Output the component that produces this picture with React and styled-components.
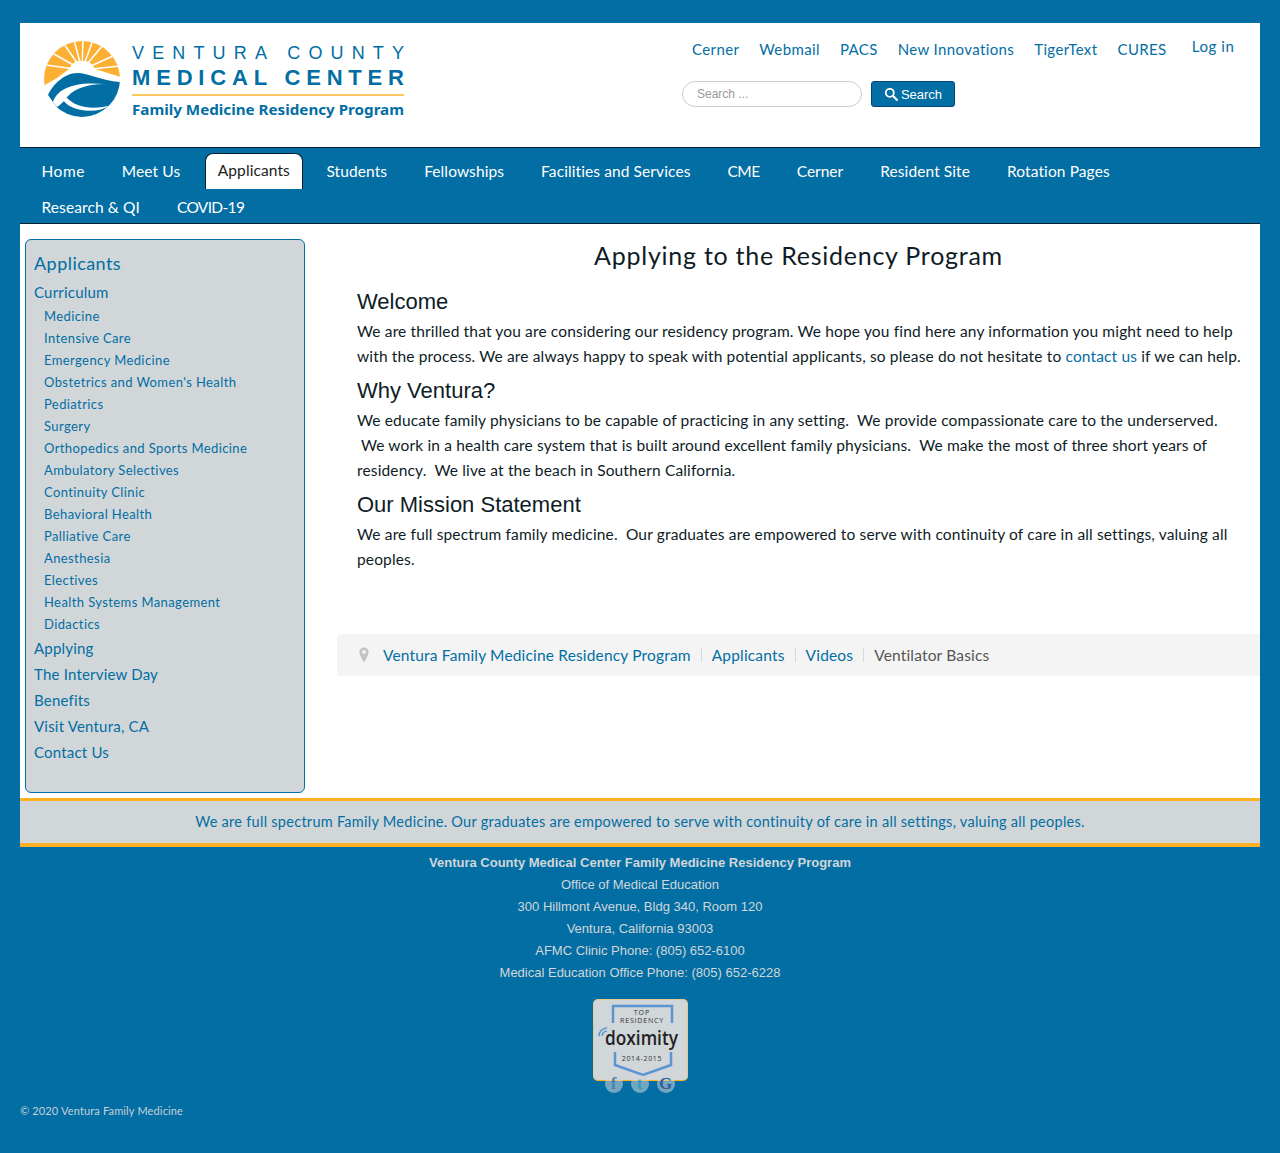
import React from "react";
import styled, { createGlobalStyle } from "styled-components";

const BLUE = "#026ea3";
const FONT = `"Lato", "Open Sans", sans-serif`;

const Global = createGlobalStyle`
  html, body { margin: 0; padding: 0; background: ${BLUE}; }
  body { font-family: ${FONT}; font-size: 15px; color: #0e1c26; }
  a { color: ${BLUE}; text-decoration: none; }
`;

const Page = styled.div`
  width: 1240px;
  margin: 0 auto;
  padding-top: 23px;
  height: 1130px;
`;
const Header = styled.header`
  background: #fff;
  height: 124px;
  display: flex;
  justify-content: space-between;
`;
const LogoWrap = styled.div`
  padding: 17px 0 0 23px;
`;
const HeaderRight = styled.div`
  width: 578px;
  display: flex;
  flex-direction: column;
`;
const TopLinks = styled.div`
  display: flex;
  align-items: flex-start;
  padding-top: 16px;
  height: 42px;
`;
const TopLink = styled.a`
  font-size: 15px;
  line-height: 20px;
  letter-spacing: 0.38px;
  margin-left: ${(p) => p.$ml}px;
`;
const LogIn = styled.a`
  font-size: 15px;
  line-height: 20px;
  letter-spacing: 0.6px;
  margin-left: 25px;
  margin-top: -3px;
`;
const SearchRow = styled.form`
  display: flex;
  gap: 9px;
  margin: 0;
`;
const SearchInput = styled.input`
  width: 180px;
  height: 26px;
  box-sizing: border-box;
  border: 1px solid #ccc;
  border-radius: 13px;
  padding: 0 14px;
  font: 12px "Liberation Sans", sans-serif;
  background: #fff;
  &::placeholder { color: #999; opacity: 1; }
`;
const SearchButton = styled.button`
  height: 26px;
  width: 84px;
  box-sizing: border-box;
  display: flex;
  align-items: center;
  justify-content: center;
  gap: 2px;
  background: ${BLUE};
  color: #fff;
  border: 1px solid #04437e;
  border-radius: 3px;
  font: 13px "Liberation Sans", sans-serif;
  padding: 0;
`;
const Nav = styled.nav`
  background: ${BLUE};
  border-top: 1px solid #06202f;
  border-bottom: 1px solid #06202f;
  height: 75px;
  padding-left: 3px;
`;
const NavRow = styled.div`
  display: flex;
  height: ${(p) => p.$h}px;
  padding-top: ${(p) => p.$pt}px;
  box-sizing: border-box;
`;
const NavItem = styled.a`
  display: block;
  box-sizing: border-box;
  color: ${(p) => (p.$active ? "#222" : "#fff")};
  background: ${(p) => (p.$active ? "#fff" : "transparent")};
  border: 1px solid ${(p) => (p.$active ? "#06202f" : "transparent")};
  border-bottom: 0;
  border-radius: 8px 8px 0 0;
  height: 36px;
  line-height: ${(p) => (p.$active ? "33px" : "35px")};
  font-size: 15.5px;
  letter-spacing: ${(p) => p.$ls ?? 0.1}px;
  padding: 0 ${(p) => (p.$active ? 12 : 17.5)}px;
  margin: ${(p) => (p.$active ? "0 5px 0 6px" : "0")};
  white-space: nowrap;
`;
const Main = styled.main`
  background: #fff;
  height: 574px;
  display: flex;
  padding: 15px 0 0 5px;
  box-sizing: border-box;
`;
const Side = styled.aside`
  width: 280px;
  height: 554px;
  box-sizing: border-box;
  background: #d1d6d9;
  border: 1px solid ${BLUE};
  border-radius: 6px;
  padding: 10px 8px;
  flex: none;
`;
const SideTitle = styled.a`
  display: block;
  font-size: 18px;
  letter-spacing: 0.45px;
  line-height: 26px;
  margin-bottom: 3px;
`;
const SideTop = styled.a`
  display: block;
  font-size: 15px;
  letter-spacing: 0.2px;
  line-height: 26px;
`;
const SideSub = styled.a`
  display: block;
  font-size: 13px;
  letter-spacing: 0.4px;
  line-height: 22px;
  padding-left: 10px;
`;
const Content = styled.div`
  flex: 1;
  margin-left: 32px;
  display: flex;
  flex-direction: column;
`;
const Title = styled.h1`
  margin: -1px 0 0;
  text-align: center;
  font: 400 25px/34px ${FONT};
  letter-spacing: 0.75px;
  color: #0e1c26;
`;
const Article = styled.article`
  padding: 14px 16px 0 20px;
  height: 342px;
  box-sizing: border-box;
`;
const Heading = styled.h2`
  margin: 0 0 1px;
  font: 400 22px/32px "Liberation Sans", Arial, sans-serif;
  color: #0e1c26;
`;
const Para = styled.p`
  margin: 0 0 6px;
  font-size: 15.5px;
  line-height: 25px;
  letter-spacing: 0.15px;
  color: #0e1c26;
`;
const Crumbs = styled.div`
  margin-top: 20px;
  height: 42px;
  background: #f4f4f4;
  border-radius: 4px 0 0 4px;
  display: flex;
  align-items: center;
  padding-left: 22px;
  font-size: 15.5px;
  line-height: 40px;
  letter-spacing: 0.17px;
  color: #555;
`;
const CrumbLink = styled.a`
  margin-left: ${(p) => p.$ml || 0}px;
`;
const Divider = styled.span`
  width: 1px;
  height: 14px;
  background: #d8d8d8;
  margin: 0 10px;
`;
const Strip = styled.div`
  background: #d1d6d9;
  border-top: 3px solid #fdb022;
  border-bottom: 4px solid #fdb022;
  height: 42px;
  line-height: 42px;
  text-align: center;
  color: ${BLUE};
  font-size: 14.5px;
  letter-spacing: 0.27px;
`;
const Contact = styled.div`
  text-align: center;
  font: 13px/22px "Liberation Sans", Arial, sans-serif;
  color: #d1d6d9;
  padding-top: 5px;
`;
const BadgeWrap = styled.div`
  position: relative;
  width: 95px;
  height: 82px;
  margin: 15px auto 0;
`;
const Badge = styled.div`
  width: 95px;
  height: 82px;
  box-sizing: border-box;
  background: #d1d6d9;
  border: 1px solid #e8c98c;
  border-bottom-color: #fdb022;
  border-radius: 5px;
  overflow: hidden;
`;
const BadgeSvgText = styled.text`
  font-family: "Open Sans", sans-serif;
`;
const Social = styled.div`
  position: absolute;
  left: 12px;
  top: 76px;
  display: flex;
  gap: 8px;
`;
const SocialIcon = styled.span`
  width: 18px;
  height: 18px;
  border-radius: 50%;
  background: rgba(209, 214, 217, 0.55);
  color: ${(p) => p.$c};
  display: flex;
  align-items: center;
  justify-content: center;
  font: 700 17px/18px "Liberation Serif", serif;
`;
const Copy = styled.div`
  margin-top: 23px;
  font-size: 11px;
  letter-spacing: 0.15px;
  color: #c6d0d6;
`;

const rays = [[21, 4], [31, 0], [40, -1], [50, 0], [60, 5], [11, 14], [70, 16], [3, 25], [78, 26]];

function Logo() {
  return (
    <svg width="368" height="88" viewBox="0 0 368 88">
      <defs>
        <clipPath id="c"><circle cx="39" cy="39" r="38" /></clipPath>
      </defs>
      <g clipPath="url(#c)">
        <rect x="0" y="0" width="78" height="50" fill="#fbb034" />
        <g stroke="#fff" strokeWidth="1.5">
          {rays.map(([x, y]) => <line key={x} x1="39" y1="30" x2={x} y2={y} />)}
        </g>
        <path d="M0 46 L14 38 L26 29 A14 13 0 0 1 52 29 L78 37 V80 H0 Z" fill="#fff" />
        <path d="M5 55 C10 44 22 33 34 33 C46 33 58 41 78 42 V80 H22 C18 76 14 70 13 66 L10 62 Z" fill="#026ea3" />
        <path d="M10 62 C14 50 28 41 62 44 C42 44 28 50 22 60 C19 63 16 66 14 67 Z" fill="#fff" />
        <path d="M19 58 C24 70 50 76 69 65 C50 70 34 68 24 58 Z" fill="#fff" />
      </g>
      <text x="89" y="19" fontFamily='"Liberation Sans", sans-serif' fontSize="18" textLength="272" lengthAdjust="spacing" fill="#026ea3">VENTURA COUNTY</text>
      <text x="89" y="45" fontFamily='"Liberation Sans", sans-serif' fontWeight="700" fontSize="22" textLength="272" lengthAdjust="spacing" fill="#026ea3">MEDICAL CENTER</text>
      <rect x="89" y="54" width="272" height="2" fill="#fbc760" />
      <text x="89" y="75" fontFamily='"Noto Sans", sans-serif' fontWeight="700" fontSize="15" textLength="272" lengthAdjust="spacingAndGlyphs" fill="#026ea3">Family Medicine Residency Program</text>
    </svg>
  );
}

function SearchIcon() {
  return (
    <svg width="15" height="15" viewBox="0 0 15 15" fill="none" stroke="#fff" strokeWidth="1.800">
      <circle cx="5.800" cy="5.800" r="4" />
      <line x1="8.800" y1="8.800" x2="13.500" y2="13.500" strokeWidth="2.200" />
    </svg>
  );
}

function Pin() {
  return (
    <svg width="10" height="16" viewBox="0 0 10 16">
      <path d="M5 0.5a4.6 4.6 0 0 0-4.6 4.6C.4 8.6 5 15.500 5 15.500S9.600 8.600 9.600 5.100A4.600 4.600 0 0 0 5 .5Zm0 6.500a2 2 0 1 1 0-4 2 2 0 0 1 0 4Z" fill="#c4c4c4" />
    </svg>
  );
}

function BadgeArt() {
  return (
    <svg width="93" height="80" viewBox="1 1 93 80" style={{ display: "block" }}>
      <path d="M20 24 V7 H79 V24" fill="none" stroke="#5c93d3" strokeWidth="2.500" />
      <BadgeSvgText x="49" y="16" textAnchor="middle" fontSize="7" letterSpacing="1" fill="#333">TOP</BadgeSvgText>
      <BadgeSvgText x="49" y="24" textAnchor="middle" fontSize="7" letterSpacing="0.8" fill="#333">RESIDENCY</BadgeSvgText>
      <path d="M6 37 A8 8 0 0 1 14 29" fill="none" stroke="#5c93d3" strokeWidth="1.500" />
      <path d="M9 37 A5 5 0 0 1 14 32" fill="none" stroke="#5c93d3" strokeWidth="1.500" />
      <BadgeSvgText x="12" y="46" fontSize="19" fontWeight="600" fill="#222" textLength="73" lengthAdjust="spacingAndGlyphs">doximity</BadgeSvgText>
      <BadgeSvgText x="49" y="62" textAnchor="middle" fontSize="7" letterSpacing="0.7" fill="#333">2014-2015</BadgeSvgText>
      <path d="M22 53 V66 L50 76 L78 66 V53" fill="none" stroke="#5c93d3" strokeWidth="2.500" />
    </svg>
  );
}

const subs = ["Medicine", "Intensive Care", "Emergency Medicine", "Obstetrics and Women's Health", "Pediatrics", "Surgery", "Orthopedics and Sports Medicine", "Ambulatory Selectives", "Continuity Clinic", "Behavioral Health", "Palliative Care", "Anesthesia", "Electives", "Health Systems Management", "Didactics"];
const tops = ["Applying", "The Interview Day", "Benefits", "Visit Ventura, CA", "Contact Us"];

export default function App() {
  return (
    <Page>
      <Global />
      <Header>
        <LogoWrap><Logo /></LogoWrap>
        <HeaderRight>
          <TopLinks>
            <TopLink $ml={10} href="#">Cerner</TopLink>
            <TopLink $ml={20} href="#">Webmail</TopLink>
            <TopLink $ml={20} href="#">PACS</TopLink>
            <TopLink $ml={20} href="#">New Innovations</TopLink>
            <TopLink $ml={20} href="#">TigerText</TopLink>
            <TopLink $ml={20} href="#">CURES</TopLink>
            <LogIn href="#">Log in</LogIn>
          </TopLinks>
          <SearchRow>
            <SearchInput placeholder="Search ..." />
            <SearchButton type="button"><SearchIcon />Search</SearchButton>
          </SearchRow>
        </HeaderRight>
      </Header>
      <Nav>
        <NavRow $h={41} $pt={5}>
          <NavItem $ls={0.5} href="#">Home</NavItem>
          <NavItem href="#">Meet Us</NavItem>
          <NavItem $active href="#">Applicants</NavItem>
          <NavItem href="#">Students</NavItem>
          <NavItem href="#">Fellowships</NavItem>
          <NavItem href="#">Facilities and Services</NavItem>
          <NavItem $ls={-0.5} href="#">CME</NavItem>
          <NavItem $ls={0} href="#">Cerner</NavItem>
          <NavItem href="#">Resident Site</NavItem>
          <NavItem href="#">Rotation Pages</NavItem>
        </NavRow>
        <NavRow $h={34} $pt={0}>
          <NavItem href="#">Research &amp; QI</NavItem>
          <NavItem $ls={-0.65} href="#">COVID-19</NavItem>
        </NavRow>
      </Nav>
      <Main>
        <Side>
          <SideTitle href="#">Applicants</SideTitle>
          <SideTop href="#">Curriculum</SideTop>
          {subs.map((s) => <SideSub key={s} href="#">{s}</SideSub>)}
          {tops.map((s) => <SideTop key={s} href="#">{s}</SideTop>)}
        </Side>
        <Content>
          <Title>Applying to the Residency Program</Title>
          <Article>
            <Heading>Welcome</Heading>
            <Para>We are thrilled that you are considering our residency program. We hope you find here any information you might need to help with the process. We are always happy to speak with potential applicants, so please do not hesitate to <a href="#">contact us</a> if we can help.</Para>
            <Heading>Why Ventura?</Heading>
            <Para>{"We educate family physicians to be capable of practicing in any setting.\u00a0 We provide compassionate care to the underserved. \u00a0We work in a health care system that is built around excellent family physicians.\u00a0 We make the most of three short years of residency.\u00a0 We live at the beach in Southern California."}</Para>
            <Heading>Our Mission Statement</Heading>
            <Para>{"We are full spectrum family medicine.\u00a0 Our graduates are empowered to serve with continuity of care in all settings, valuing all peoples."}</Para>
          </Article>
          <Crumbs>
            <Pin />
            <CrumbLink $ml={14} href="#">Ventura Family Medicine Residency Program</CrumbLink>
            <Divider />
            <CrumbLink href="#">Applicants</CrumbLink>
            <Divider />
            <CrumbLink href="#">Videos</CrumbLink>
            <Divider />
            <span>Ventilator Basics</span>
          </Crumbs>
        </Content>
      </Main>
      <Strip>We are full spectrum Family Medicine. Our graduates are empowered to serve with continuity of care in all settings, valuing all peoples.</Strip>
      <Contact>
        <div><strong>Ventura County Medical Center Family Medicine Residency Program</strong></div>
        <div>Office of Medical Education</div>
        <div>300 Hillmont Avenue, Bldg 340, Room 120</div>
        <div>Ventura, California 93003</div>
        <div>AFMC Clinic Phone: (805) 652-6100</div>
        <div>Medical Education Office Phone: (805) 652-6228</div>
      </Contact>
      <BadgeWrap>
        <Badge><BadgeArt /></Badge>
        <Social>
          <SocialIcon $c="#4f7fae">f</SocialIcon>
          <SocialIcon $c="#2f9fbd">t</SocialIcon>
          <SocialIcon $c="#2e5f9c">G</SocialIcon>
        </Social>
      </BadgeWrap>
      <Copy>© 2020 Ventura Family Medicine</Copy>
    </Page>
  );
}
